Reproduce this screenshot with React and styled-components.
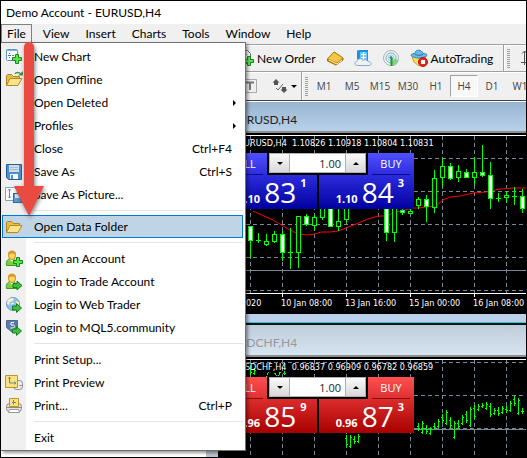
import { useState } from 'react';
import styled, { createGlobalStyle } from 'styled-components';

const MENUS = ['View', 'Insert', 'Charts', 'Tools', 'Window', 'Help'];
const PERIODS = ['M1', 'M5', 'M15', 'M30', 'H1', 'H4', 'D1', 'W1'];

/* icons */
const Plus = ({ x, y }) => (
  <path
    transform={`translate(${x} ${y})`}
    d="M3 0h3v3h3v3H6v3H3V6H0V3h3z"
    fill="#5be24a"
    stroke="#158a1c"
  />
);

const GoArrow = ({ x, y }) => (
  <path
    transform={`translate(${x} ${y})`}
    d="M0 2.5h4V0l5 4.5L4 9V6.5H0z"
    fill="#3cc034"
    stroke="#1a7c22"
  />
);

const Person = () => (
  <>
    <path d="M1.5 15.5c-1-5 2-7 5-7s6 2 5.5 7z" fill="#7ccf3a" stroke="#3f9a2a" />
    <path d="M4.5 9l2.5 3 2-3z" fill="#fff" />
    <ellipse cx="7" cy="5.5" rx="3.5" ry="4" fill="#fbd75c" stroke="#c28a20" />
    <path d="M3 5c-1-6 9-6 8 0-2-2-5-2-8 0z" fill="#d49a2a" />
  </>
);

const Folder = () => (
  <>
    <path d="M1.5 14V4.5l1-1h4l2 2h6V8" fill="#e8bc48" stroke="#b08420" />
    <path d="M1.5 14.5L5 7.5h12l-4 7z" fill="#fde38a" stroke="#b98a1e" />
  </>
);

const ICONS = {
  chart: (
    <>
      <rect x="1.5" y="1.5" width="11" height="11" rx="1" fill="#fff" stroke="#5a94cc" />
      <path d="M2 2.5h10" stroke="#7ab0e0" />
      <path d="M4.5 5v1M4.5 7v1M4.5 9v1M3 7.5h3M7 7.5h2" stroke="#4a78a8" />
      <Plus x={7.5} y={6.5} />
    </>
  ),
  offline: (
    <>
      <Folder />
      <path d="M10 3c1-2 4-2 6 0" fill="none" stroke="#3a9a4a" strokeWidth="1.5" />
      <path d="M13 4.5h5V0z" fill="#3a9a4a" />
    </>
  ),
  folder: <Folder />,
  save: (
    <>
      <path d="M1.5 1.5h15v15h-13l-2-2z" fill="#4a90d0" stroke="#2a5c98" />
      <rect x="4" y="2" width="10" height="7" fill="#d0dde8" />
      <path d="M5 4.5h8M5 6.5h8" stroke="#a8bccc" />
      <rect x="5" y="11" width="8" height="5" fill="#f2f8fd" />
      <rect x="6" y="12" width="2" height="4" fill="#4a90d0" />
    </>
  ),
  savePicture: (
    <>
      <path d="M.5 1.5h9l3 3v10H.5z" fill="#fff" stroke="#7aa4d0" />
      <path d="M4.5 3v9M3 4.5L4.5 3 6 4.5M3 10.5L4.5 12 6 10.5" fill="none" stroke="#5a84b0" />
      <rect x="8.5" y="7.5" width="9" height="9" fill="#5a98d4" stroke="#3468a4" />
      <rect x="10" y="8" width="6" height="4" fill="#dce8f2" />
    </>
  ),
  account: (
    <>
      <Person />
      <Plus x={8.5} y={7.5} />
    </>
  ),
  login: (
    <>
      <Person />
      <GoArrow x={8} y={8} />
    </>
  ),
  web: (
    <>
      <circle cx="8" cy="8" r="6.5" fill="#8cc2ee" stroke="#6498c8" />
      <path d="M2 6c1-4 5-4 7-4L8 5 5 6l-1 3-2-1zM11 5l3 1v4l-3-1z" fill="#f8eeb8" />
      <path d="M4 4l3-1M6 8l3-1" stroke="#fff" />
      <GoArrow x={7.5} y={7.5} />
    </>
  ),
  mql: (
    <>
      <path d="M1.5 1.5h11v7l-5 5-6-5z" fill="#5c7ca8" stroke="#4a6890" />
      <path d="M9 3.5H6V6h2c2 0 2 3 0 3H5.5" fill="none" stroke="#fff" />
      <GoArrow x={7.5} y={7.5} />
    </>
  ),
  preview: (
    <>
      <rect x="8.5" y="6.5" width="9" height="9" rx="3" fill="#ececec" stroke="#8a8a8a" />
      <path d="M.5 1.5h12v12H.5z" fill="#fde27c" stroke="#c09428" />
      <path d="M4.5 3v6H11M3.5 4.5l1-1.5 1 1.5M9.5 7.5L11 9l-1.5 1.5" fill="none" stroke="#6484a8" />
      <path d="M14 11.5h3" stroke="#999" />
    </>
  ),
  print: (
    <>
      <rect x="1.5" y="6.5" width="15" height="8" rx="3" fill="#e4e4e4" stroke="#8a8a8a" />
      <path d="M4.5 1.5h9v8h-9z" fill="#fde27c" stroke="#c09428" />
      <path d="M8.5 3v4.5M7 5.5h4" fill="none" stroke="#6484a8" />
      <path d="M2 10.5h14" stroke="#8a8a8a" />
      <path d="M4.5 12.5h9l1 3h-11z" fill="#fff" stroke="#999" />
    </>
  ),
};

const FILE_MENU = [
  { label: 'New Chart', icon: 'chart' },
  { label: 'Open Offline', icon: 'offline' },
  { label: 'Open Deleted', sub: true },
  { label: 'Profiles', sub: true },
  { label: 'Close', keys: 'Ctrl+F4' },
  { label: 'Save As', icon: 'save', keys: 'Ctrl+S' },
  { label: 'Save As Picture...', icon: 'savePicture' },
  null,
  { label: 'Open Data Folder', icon: 'folder' },
  null,
  { label: 'Open an Account', icon: 'account' },
  { label: 'Login to Trade Account', icon: 'login' },
  { label: 'Login to Web Trader', icon: 'web' },
  { label: 'Login to MQL5.community', icon: 'mql' },
  null,
  { label: 'Print Setup...' },
  { label: 'Print Preview', icon: 'preview' },
  { label: 'Print...', icon: 'print', keys: 'Ctrl+P' },
  null,
  { label: 'Exit' },
];

/* x, high, low, body top, body bottom, type (b = bear, u = bull, d = doji) */
const CANDLES = [
  [32, 90, 122, 90, 105, 'b'],
  [40, 97, 107, 104, 105, 'd'],
  [48, 98, 110, 105, 109, 'u'],
  [56, 95, 107, 98, 106, 'u'],
  [64, 95, 125, 98, 117, 'b'],
  [72, 92, 133, 116, 117, 'd'],
  [80, 80, 132, 80, 117, 'u'],
  [88, 78, 90, 80, 89, 'b'],
  [96, 79, 94, 81, 90, 'u'],
  [104, 60, 84, 62, 82, 'u'],
  [112, 60, 91, 62, 91, 'b'],
  [120, 60, 95, 85, 91, 'u'],
  [128, 60, 87, 62, 84, 'u'],
  [168, 60, 105, 62, 97, 'b'],
  [176, 60, 106, 62, 97, 'u'],
  [184, 70, 79, 74, 77, 'b'],
  [192, 70, 78, 75, 78, 'u'],
  [200, 61, 73, 63, 70, 'u'],
  [208, 59, 86, 63, 71, 'b'],
  [216, 34, 77, 42, 72, 'u'],
  [224, 22, 51, 30, 42, 'u'],
  [232, 27, 44, 30, 43, 'b'],
  [240, 29, 46, 35, 42, 'u'],
  [248, 33, 42, 36, 42, 'b'],
  [256, 21, 49, 36, 42, 'u'],
  [264, 9, 41, 36, 40, 'b'],
  [272, 26, 73, 39, 63, 'b'],
  [280, 57, 66, 62, 63, 'd'],
  [288, 55, 67, 59, 62, 'u'],
  [296, 51, 69, 60, 61, 'd'],
  [304, 53, 77, 60, 73, 'b'],
];

const AVERAGE =
  '35,75 55,84 72,94 80,98 89,99 97,98 103,96 112,96 120,95 128,92 138,88 150,83 160,80 168,80 178,76 196,72 200,72 218,70 225,64 232,61 242,60 255,57 268,56 282,53 295,52 308,52';

/* x, high, low */
const BARS = [
  [32, 5, 15], [36, 8, 15], [49, 13, 15], [57, 13, 15], [61, 12, 15], [66, 11, 15],
  [128, 75, 87], [132, 75, 88], [136, 76, 84], [140, 74, 83],
  [200, 63, 71], [204, 61, 74], [208, 65, 74], [212, 67, 75], [216, 63, 70],
  [220, 59, 68], [224, 54, 63], [228, 50, 65], [232, 57, 68], [236, 61, 79],
  [240, 60, 69], [244, 55, 65], [248, 51, 63], [252, 47, 67], [256, 45, 59],
  [260, 44, 51], [264, 43, 48], [268, 42, 50], [272, 43, 57], [276, 48, 55],
  [280, 47, 56], [284, 46, 54], [288, 46, 53], [292, 41, 52], [296, 36, 46],
  [300, 38, 55], [304, 48, 54],
];

const AXIS = [[0, '8 Jan 2020'], [63, '10 Jan 08:00'], [127, '13 Jan 16:00'], [191, '15 Jan 00:00'], [255, '16 Jan 08:00']];
const COLUMNS = [32, 64, 96, 128, 160, 192, 224, 256, 288];

const Grid = ({ rows, bottom }) => (
  <g stroke="#778899" strokeDasharray="4 3">
    {COLUMNS.map(x => <path key={x} d={`M${x}.5 0V${bottom}`} />)}
    {rows.map(y => <path key={y} d={`M0 ${y}.5H600`} />)}
  </g>
);

const CandleChart = () => (
  <Plot $height={178} role="img" aria-label="EURUSD H4 chart">
    <Grid rows={[22, 55, 88, 121, 154]} bottom={157} />
    <path d="M0 134.5H600" stroke="#778899" />
    <polyline points={AVERAGE} fill="none" stroke="#ff0000" />
    {CANDLES.map(([x, high, low, top, bottom, type]) => (
      <g key={x} stroke="#00ff00">
        <path d={`M${x}.5 ${high}V${low}`} />
        {type === 'd'
          ? <path d={`M${x - 2} ${top}.5h5`} />
          : <rect x={x - 1.5} y={top + 0.5} width="4" height={bottom - top - 1} fill={type === 'b' ? '#fff' : '#000'} />}
      </g>
    ))}
    <path d="M0 157.5H600M64.5 158v3M128.5 158v3M192.5 158v3M256.5 158v3" stroke="#fff" />
    {AXIS.map(([x, label]) => <PlotText key={label} x={x} y="170">{label}</PlotText>)}
  </Plot>
);

const BarChart = () => (
  <Plot $height={97} role="img" aria-label="USDCHF H4 chart">
    <Grid rows={[2, 35, 68]} bottom={97} />
    <path d="M0 69.5H600" stroke="#778899" />
    {BARS.map(([x, high, low], i) => (
      <path
        key={x}
        d={`M${x}.5 ${high}V${low}M${x - 1} ${i % 2 ? low - 2 : high + 3}.5h1M${x + 1} ${i % 2 ? high + 2 : low - 3}.5h1`}
        stroke="#00ff00"
      />
    ))}
  </Plot>
);

const TradePanel = ({ tone, sell, buy, name }) => {
  const [volume, setVolume] = useState(1);
  return (
    <Trade>
      <TradeTop>
        <Side $tone={tone}>SELL</Side>
        <Spinner>
          <Step aria-label="Decrease volume" onClick={() => setVolume(v => Math.max(0, v - 1))}><Caret /></Step>
          <Volume
            aria-label={`${name} volume`}
            value={volume.toFixed(2)}
            onChange={e => setVolume(Number(e.target.value) || 0)}
          />
          <Step aria-label="Increase volume" onClick={() => setVolume(v => v + 1)}><Caret $up /></Step>
        </Spinner>
        <Side $tone={tone}>BUY</Side>
      </TradeTop>
      <TradeBottom>
        {[sell, buy].map(([small, big, pip]) => (
          <Price key={big} $tone={tone}>
            <Small>{small}</Small>
            <Big>{big}</Big>
            <Pip>{pip}</Pip>
          </Price>
        ))}
      </TradeBottom>
    </Trade>
  );
};

const App = () => {
  const [active, setActive] = useState('Open Data Folder');
  const [period, setPeriod] = useState('H4');
  return (
    <Frame>
      <GlobalStyle />
      <TitleBar>Demo Account - EURUSD,H4</TitleBar>
      <MenuBar>
        <FileButton>File</FileButton>
        {MENUS.map(name => <MenuButton key={name}>{name}</MenuButton>)}
      </MenuBar>

      <MainTools>
        <Tool>
          <Icon $size={18} viewBox="0 0 18 18">
            <path d="M3.5 1.5h8l3 3v10h-11z" fill="#fff" stroke="#666" />
            <path d="M5 5.5h6M5 8.5h5" stroke="#888" />
            <Plus x={8.5} y={7.5} />
          </Icon>
          New Order
        </Tool>
        <Tool aria-label="MetaEditor">
          <Icon $size={18} viewBox="0 0 18 18">
            <path d="M1.5 10L8 3l9 6v2l-7 5-8.5-4z" fill="#d89a20" stroke="#9a6810" />
            <path d="M1.5 10L8 3l9 6-6 5z" fill="#f6c848" stroke="#b88418" />
            <path d="M3 11l8 4 5-4" fill="none" stroke="#fff0b0" />
          </Icon>
        </Tool>
        <Tool aria-label="Market">
          <Icon $size={18} viewBox="0 0 18 18">
            <path d="M3 1.5l3-.5h8v11H5l-2-2z" fill="#1e90e8" />
            <path d="M6 3h7v8H6z" fill="#6cc8fc" />
            <path d="M7 5.5h5M7 8.5h5M9.5 3v8" stroke="#fff" />
            <path d="M4 16.5c-4 0-4-4-1-4 0-3 5-4 6-1 2-2 5 0 5 1 4 0 4 4 1 4z" fill="#edf2fa" stroke="#8ca8cc" />
          </Icon>
        </Tool>
        <Tool aria-label="Signals">
          <Icon $size={18} viewBox="0 0 18 18">
            <path d="M9 9l7.5 2c-1 4-3 6-7.5 6z" fill="#86d878" />
            <g fill="none">
              <circle cx="9" cy="9" r="7.5" stroke="#a4b8bc" />
              <circle cx="9" cy="9" r="5" stroke="#7cb4c4" />
              <circle cx="9" cy="9" r="3" stroke="#a8d0dc" />
            </g>
            <circle cx="9" cy="8.5" r="1.5" fill="#2c8ac0" />
            <path d="M9.5 9v8" stroke="#1c9a30" strokeWidth="2" />
          </Icon>
        </Tool>
        <Tool>
          <Icon $size={18} viewBox="0 0 18 18">
            <path d="M2 8l2 5 5 4 5-4 2-6z" fill="#fadc64" stroke="#cca02c" />
            <path d="M1 6.5c0-2 3-2 4-2 0-4.5 7-4.5 8 0 2 0 4 0 4 2-4 3.5-12 3.5-16 0z" fill="#6cb8e4" stroke="#3c88b8" />
            <path d="M5 5.5c2 1 6 1 8 0" fill="none" stroke="#2c74a4" />
            <circle cx="13" cy="13" r="4.5" fill="#e02818" stroke="#b81810" />
            <rect x="11" y="11" width="4" height="4" fill="#fff" />
          </Icon>
          AutoTrading
        </Tool>
        <Divider />
        <Grip />
        <Tool aria-label="Bar chart">
          <Icon $size={18} viewBox="0 0 18 18">
            <path d="M4.5 2v14M2 4.5L4.5 2 7 4.5M1 13.5h16" fill="none" stroke="#555" />
            <path d="M8 6.5h2M10.500 4v7M11 9.500h2" fill="none" stroke="#1ca02c" />
          </Icon>
        </Tool>
      </MainTools>

      <PeriodTools>
        <Tool aria-label="Text label">
          <Icon $size={16} viewBox="0 0 16 16">
            <rect x="1.5" y="1.5" width="13" height="13" fill="none" stroke="#666" strokeDasharray="1 1" />
            <path d="M4 4.5h8M8 4v8" stroke="#777" strokeWidth="2" />
          </Icon>
        </Tool>
        <Tool aria-label="Arrows">
          <Icon $size={16} viewBox="0 0 16 16">
            <path d="M4 1l3.5 3.5H6V7H2V4.5H.5zM12 15l-3.5-3.5H10V9h4v2.5h1.5z" fill="#555" />
            <path d="M4 10l2 2 5-6" fill="none" stroke="#666" />
          </Icon>
          <Caret />
        </Tool>
        <Divider />
        <Grip />
        {PERIODS.map(name => (
          <Period key={name} $on={name === period} onClick={() => setPeriod(name)}>{name}</Period>
        ))}
      </PeriodTools>

      <Workspace>
        <Navigator />
        <Windows>
          <ChartWindow $active>
            <ChartTitle $active>EURUSD,H4</ChartTitle>
            <ChartBody>
              <CandleChart />
              <Quote>EURUSD,H4&nbsp; 1.10826 1.10918 1.10804 1.10831</Quote>
              <TradePanel tone="blue" name="EURUSD" sell={['1.10', '83', '1']} buy={['1.10', '84', '3']} />
            </ChartBody>
          </ChartWindow>
          <ChartWindow>
            <ChartTitle>USDCHF,H4</ChartTitle>
            <ChartBody>
              <BarChart />
              <Quote>USDCHF,H4&nbsp; 0.96837 0.96909 0.96782 0.96859</Quote>
              <TradePanel tone="red" name="USDCHF" sell={['0.96', '85', '9']} buy={['0.96', '87', '3']} />
            </ChartBody>
          </ChartWindow>
        </Windows>
      </Workspace>

      <FileMenu>
        {FILE_MENU.map((item, i) => item ? (
          <Item key={item.label} $on={item.label === active} onMouseEnter={() => setActive(item.label)}>
            <IconCell>
              {item.icon && <Icon $size={18} viewBox="0 0 18 18">{ICONS[item.icon]}</Icon>}
            </IconCell>
            <Label>{item.label}</Label>
            {item.keys && <Keys>{item.keys}</Keys>}
            {item.sub && <SubArrow />}
          </Item>
        ) : <Separator key={i} />)}
      </FileMenu>

      <Pointer viewBox="0 0 36 182" aria-hidden="true">
        <path d="M13 10a5 5 0 0 1 10 0V149h10L18 179 3 149H13z" fill="#e94b43" />
      </Pointer>
    </Frame>
  );
};

const GlobalStyle = createGlobalStyle`
  * {
    box-sizing: border-box;
  }
  body {
    margin: 0;
    overflow: hidden;
  }
  button, input {
    font: inherit;
    color: inherit;
    margin: 0;
    padding: 0;
    border: none;
    background: none;
  }
`;
const Frame = styled.div`
  position: relative;
  width: 100%;
  height: 100vh;
  overflow: hidden;
  display: flex;
  flex-direction: column;
  border: 1px solid #000;
  background: #f0f0f0;
  color: #000;
  font-family: Lato, "Open Sans", sans-serif;
  font-size: 12px;
`;
const TitleBar = styled.header`
  flex: none;
  height: 23px;
  padding-left: 5px;
  line-height: 23px;
  background: #fff;
`;
const MenuBar = styled.nav`
  flex: none;
  height: 20px;
  display: flex;
`;
const MenuButton = styled.button`
  padding: 0 8px;
  line-height: 20px;
`;
const FileButton = styled(MenuButton)`
  margin-right: 3px;
  padding: 0 5px;
  line-height: 18px;
  border: 1px solid #808080;
`;

/* toolbars */
const Toolbar = styled.div`
  flex: none;
  display: flex;
  align-items: center;
  overflow: hidden;
  border-top: 1px solid #a0a0a0;
  box-shadow: inset 0 1px #fff;
`;
const MainTools = styled(Toolbar)`
  height: 27px;
  padding-left: 235px;
  gap: 10px;
`;
const PeriodTools = styled(Toolbar)`
  height: 30px;
  padding-left: 231px;
  border-bottom: 1px solid #444;
`;
const Tool = styled.button`
  flex: none;
  display: flex;
  align-items: center;
  gap: 3px;
  white-space: nowrap;
  ${PeriodTools} & {
    margin: 0 4px 0 10px;
  }
`;
const Icon = styled.svg`
  flex: none;
  display: block;
  width: ${p => p.$size}px;
  height: ${p => p.$size}px;
`;
const Divider = styled.span`
  flex: none;
  width: 2px;
  height: 100%;
  border-left: 1px solid #a0a0a0;
  border-right: 1px solid #fff;
`;
const Grip = styled.span`
  flex: none;
  width: 3px;
  height: 19px;
  margin: 0 2px;
  background: repeating-linear-gradient(#a0a0a0 0 1px, transparent 1px 2px);
  ${MainTools} & {
    margin: 0 0 0 -8px;
  }
`;
const Period = styled.button`
  flex: none;
  width: 28px;
  height: 22px;
  color: #444;
  font-family: "Open Sans", "Noto Sans", sans-serif;
  font-size: 10px;
  border: 1px solid;
  border-color: ${p => (p.$on ? '#a0a0a0 #fff #fff #a0a0a0' : 'transparent')};
  background: ${p => (p.$on ? '#f8f8f8' : 'none')};
`;

/* chart windows */
const Workspace = styled.main`
  flex: 1;
  min-height: 0;
  display: flex;
`;
const Navigator = styled.aside`
  flex: none;
  width: 217px;
  background: #fff;
  border-right: 12px solid #b8c4d0;
`;
const Windows = styled.div`
  flex: 1;
  min-width: 0;
  display: flex;
  flex-direction: column;
`;
const ChartWindow = styled.section`
  flex: none;
  display: flex;
  flex-direction: column;
  border-bottom: ${p => (p.$active ? '8px solid #b9d1ea' : 'none')};
  box-shadow: ${p => (p.$active ? '0 1px #28c8e0' : 'none')};
  margin-bottom: ${p => (p.$active ? '1px' : '0')};
`;
const ChartTitle = styled.h2`
  height: ${p => (p.$active ? '32px' : '34px')};
  margin: 0;
  padding-left: 13px;
  line-height: 36px;
  font-size: 12px;
  font-weight: normal;
  color: ${p => (p.$active ? '#222' : '#999')};
  background: ${p => (p.$active ? 'linear-gradient(#99b4d1, #b9d1ea)' : 'linear-gradient(#bfcddb, #d7e4f2)')};
  border-top: ${p => (p.$active ? '1px solid #fff' : '2px solid #111')};
  border-bottom: 2px solid #909090;
`;
const ChartBody = styled.div`
  position: relative;
  overflow: hidden;
  background: #000;
  border-top: 2px solid #000;
  box-shadow: inset 0 1px #fff;
  padding-top: 1px;
`;
const Plot = styled.svg`
  display: block;
  width: 100%;
  height: ${p => p.$height}px;
`;
const PlotText = styled.text`
  fill: #fff;
  font-family: "DejaVu Sans Condensed", "DejaVu Sans", sans-serif;
  font-size: 9px;
`;
const Quote = styled.div`
  position: absolute;
  top: 2px;
  left: 21px;
  color: #fff;
  font-family: "DejaVu Sans Condensed", "DejaVu Sans", sans-serif;
  font-size: 9px;
  line-height: 12px;
  white-space: nowrap;
`;

/* one click trading */
const TONES = {
  blue: { top: '#5050ff, #2c2cdc', bottom: '#2c2cdc, #0000a0', line: '#0a0a90' },
  red: { top: '#ff5050, #dc3030', bottom: '#dc2c2c, #a80000', line: '#900a0a' },
};
const Trade = styled.div`
  position: absolute;
  top: 18px;
  left: 3px;
  width: 193px;
  display: flex;
  flex-direction: column;
  color: #fff;
  background: #000;
  font-family: "Open Sans", "Noto Sans", sans-serif;
`;
const TradeTop = styled.div`
  display: flex;
  gap: 2px;
  height: 22px;
`;
const Side = styled.button`
  flex: 1;
  height: 22px;
  padding: 0 4px;
  font-size: 11px;
  line-height: 20px;
  background: linear-gradient(${p => TONES[p.$tone].top});
  &::after {
    content: "";
    display: block;
    height: 1px;
    background: ${p => TONES[p.$tone].line};
  }
`;
const Spinner = styled.div`
  width: 97px;
  height: 20px;
  display: flex;
  color: #222;
  border: 1px solid #b0b0b0;
  background: #fff;
`;
const Step = styled.button`
  width: 19px;
  display: flex;
  align-items: center;
  justify-content: center;
  background: linear-gradient(#fafafa, #d8d8d8);
`;
const Caret = styled.span`
  width: 0;
  height: 0;
  border: 3px solid transparent;
  border-width: ${p => (p.$up ? '0 3px 3px' : '3px 3px 0')};
  border-top-color: ${p => (p.$up ? 'transparent' : '#000')};
  border-bottom-color: ${p => (p.$up ? '#000' : 'transparent')};
`;
const Volume = styled.input`
  flex: 1;
  min-width: 0;
  padding-right: 4px;
  font-size: 11px;
  text-align: right;
  border: 1px solid #b0b0b0;
  border-width: 0 1px;
`;
const TradeBottom = styled.div`
  display: flex;
  gap: 2px;
`;
const Price = styled.button`
  flex: 1;
  height: 34px;
  padding-right: 10px;
  display: flex;
  justify-content: flex-end;
  align-items: flex-end;
  gap: 4px;
  background: linear-gradient(${p => TONES[p.$tone].bottom});
`;
const Small = styled.span`
  font-size: 11px;
  font-weight: bold;
  line-height: 20px;
`;
const Big = styled.span`
  font-size: 28px;
  line-height: 34px;
`;
const Pip = styled.span`
  align-self: flex-start;
  font-size: 11px;
  font-weight: bold;
  line-height: 16px;
`;

/* file menu */
const FileMenu = styled.div`
  position: absolute;
  top: 41px;
  left: 0;
  width: 245px;
  padding: 2px 0 1px;
  display: flex;
  flex-direction: column;
  border: 1px solid #707070;
  border-left: none;
  background: linear-gradient(90deg, #f0f0f0 25px, #fff 25px);
  box-shadow: 2px 2px 3px rgba(0, 0, 0, 0.4);
`;
const Item = styled.button`
  height: 23px;
  margin: 0 2px 0 1px;
  display: flex;
  align-items: center;
  text-align: left;
  border: 1px solid ${p => (p.$on ? '#0078d7' : 'transparent')};
  background: ${p => (p.$on ? '#bfd4e4' : 'none')};
`;
const IconCell = styled.span`
  flex: none;
  width: 31px;
  padding-left: 2px;
`;
const Label = styled.span`
  flex: 1;
`;
const Keys = styled.span`
  padding-right: 10px;
`;
const SubArrow = styled.span`
  margin-right: 6px;
  border: 3px solid transparent;
  border-left-color: #000;
  border-right: none;
`;
const Separator = styled.div`
  height: 1px;
  margin: 4px 2px 4px 33px;
  background: #e4e4e4;
`;
const Pointer = styled.svg`
  position: absolute;
  top: 36px;
  left: 10px;
  width: 36px;
  height: 182px;
  pointer-events: none;
  filter: drop-shadow(1px 2px 2px rgba(0, 0, 0, 0.5));
`;

export default App;
